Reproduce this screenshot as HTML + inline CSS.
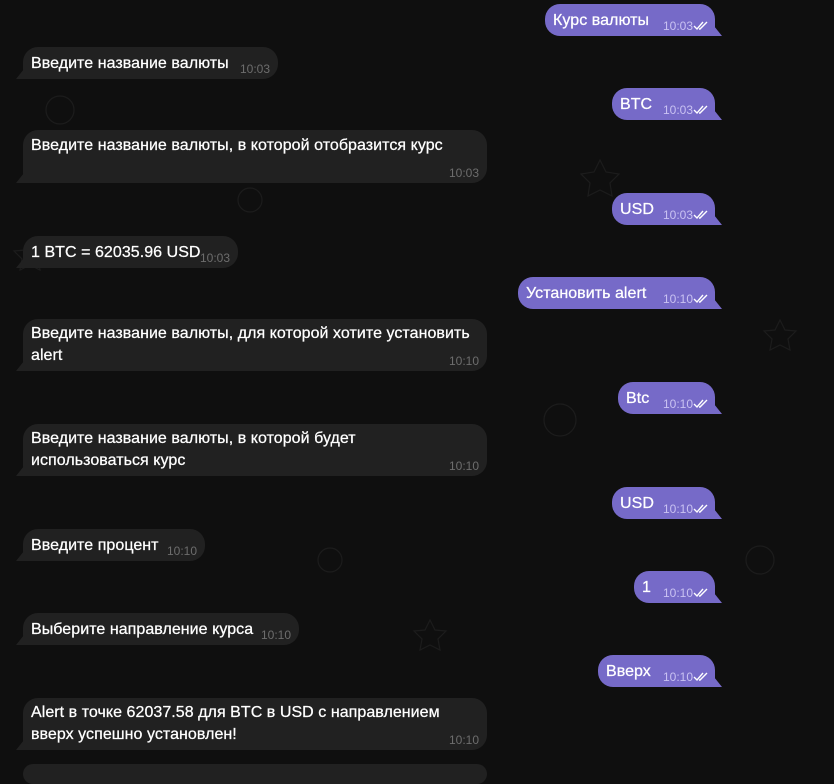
<!DOCTYPE html>
<html><head><meta charset="utf-8"><style>
html,body{margin:0;padding:0;width:834px;height:767px;overflow:hidden;background:#0f0f0f;font-family:"Liberation Sans",sans-serif;}
.b{position:absolute;border-radius:15px;color:#fff;font-size:16px;letter-spacing:0.05px;line-height:22px;box-sizing:border-box;padding:6px 8px 5px;white-space:nowrap;-webkit-text-stroke:0.25px #fff}
.i{background:#212121;border-bottom-left-radius:0}
.o{background:#766ac8;border-bottom-right-radius:0}
.t{position:absolute;font-size:12px;letter-spacing:0;right:8px;bottom:3px;line-height:14px;-webkit-text-stroke:0}
.i .t{color:#6d6d6d}
.o .t{color:#c9c2f2;right:22px}
.ck{position:absolute;right:6px;bottom:5px}
.i:before{content:"";position:absolute;left:-7px;bottom:0;width:8px;height:10px;background:#212121;clip-path:polygon(100% 0,100% 100%,0 100%)}
.o:after{content:"";position:absolute;right:-7px;bottom:0;width:8px;height:10px;background:#766ac8;clip-path:polygon(0 0,100% 100%,0 100%)}
</style></head><body>
<svg width="834" height="767" style="position:absolute;left:0;top:0" opacity="0.05"><g fill="none" stroke="#fff" stroke-width="1.2">
<circle cx="60" cy="110" r="14"/><path d="M600 160l6 12 13 2-9 9 2 13-12-6-12 6 2-13-9-9 13-2z"/><circle cx="250" cy="200" r="12"/><path d="M30 240l5 10 11 1-8 8 2 11-10-5-10 5 2-11-8-8 11-1z"/><circle cx="560" cy="420" r="16"/><path d="M780 320l5 10 11 1-8 8 2 11-10-5-10 5 2-11-8-8 11-1z"/><circle cx="760" cy="560" r="14"/><circle cx="330" cy="560" r="12"/><path d="M430 620l5 10 11 1-8 8 2 11-10-5-10 5 2-11-8-8 11-1z"/>
</g></svg>

<div class="b o" style="left:545px;top:4px;width:170px;height:32px">Курс валюты<span class="t">10:03</span><svg class="ck" width="16" height="10" viewBox="0 0 16 10"><path d="M1 5l3 3 6-7M6 8l1 0 7-7" stroke="#fff" stroke-width="1.4" fill="none"/></svg></div>
<div class="b i" style="left:23px;top:47px;width:255px;height:32px">Введите название валюты<span class="t">10:03</span></div>
<div class="b o" style="left:612px;top:88px;width:103px;height:32px">BTC<span class="t">10:03</span><svg class="ck" width="16" height="10" viewBox="0 0 16 10"><path d="M1 5l3 3 6-7M6 8l1 0 7-7" stroke="#fff" stroke-width="1.4" fill="none"/></svg></div>
<div class="b i" style="left:23px;top:130px;width:464px;height:53px;padding-top:5px">Введите название валюты, в которой отобразится курс<span class="t">10:03</span></div>
<div class="b o" style="left:612px;top:193px;width:103px;height:32px">USD<span class="t">10:03</span><svg class="ck" width="16" height="10" viewBox="0 0 16 10"><path d="M1 5l3 3 6-7M6 8l1 0 7-7" stroke="#fff" stroke-width="1.4" fill="none"/></svg></div>
<div class="b i" style="left:23px;top:236px;width:215px;height:32px">1 BTC = 62035.96 USD<span class="t">10:03</span></div>
<div class="b o" style="left:518px;top:277px;width:197px;height:32px">Установить alert<span class="t">10:10</span><svg class="ck" width="16" height="10" viewBox="0 0 16 10"><path d="M1 5l3 3 6-7M6 8l1 0 7-7" stroke="#fff" stroke-width="1.4" fill="none"/></svg></div>
<div class="b i" style="left:23px;top:319px;width:464px;height:52px;padding-top:4px">Введите название валюты, для которой хотите установить<br>alert<span class="t">10:10</span></div>
<div class="b o" style="left:618px;top:382px;width:97px;height:32px">Btc<span class="t">10:10</span><svg class="ck" width="16" height="10" viewBox="0 0 16 10"><path d="M1 5l3 3 6-7M6 8l1 0 7-7" stroke="#fff" stroke-width="1.4" fill="none"/></svg></div>
<div class="b i" style="left:23px;top:424px;width:464px;height:52px;padding-top:4px">Введите название валюты, в которой будет<br>использоваться курс<span class="t">10:10</span></div>
<div class="b o" style="left:612px;top:487px;width:103px;height:32px">USD<span class="t">10:10</span><svg class="ck" width="16" height="10" viewBox="0 0 16 10"><path d="M1 5l3 3 6-7M6 8l1 0 7-7" stroke="#fff" stroke-width="1.4" fill="none"/></svg></div>
<div class="b i" style="left:23px;top:529px;width:182px;height:32px">Введите процент<span class="t">10:10</span></div>
<div class="b o" style="left:634px;top:571px;width:81px;height:32px">1<span class="t">10:10</span><svg class="ck" width="16" height="10" viewBox="0 0 16 10"><path d="M1 5l3 3 6-7M6 8l1 0 7-7" stroke="#fff" stroke-width="1.4" fill="none"/></svg></div>
<div class="b i" style="left:23px;top:613px;width:276px;height:32px">Выберите направление курса<span class="t">10:10</span></div>
<div class="b o" style="left:598px;top:655px;width:117px;height:32px">Вверх<span class="t">10:10</span><svg class="ck" width="16" height="10" viewBox="0 0 16 10"><path d="M1 5l3 3 6-7M6 8l1 0 7-7" stroke="#fff" stroke-width="1.4" fill="none"/></svg></div>
<div class="b i" style="left:23px;top:698px;width:464px;height:52px;padding-top:4px">Alert в точке 62037.58 для BTC в USD с направлением<br>вверх успешно установлен!<span class="t">10:10</span></div>
<div style="position:absolute;left:23px;top:764px;width:464px;height:20px;background:#212121;border-radius:15px"></div>
</body></html>
